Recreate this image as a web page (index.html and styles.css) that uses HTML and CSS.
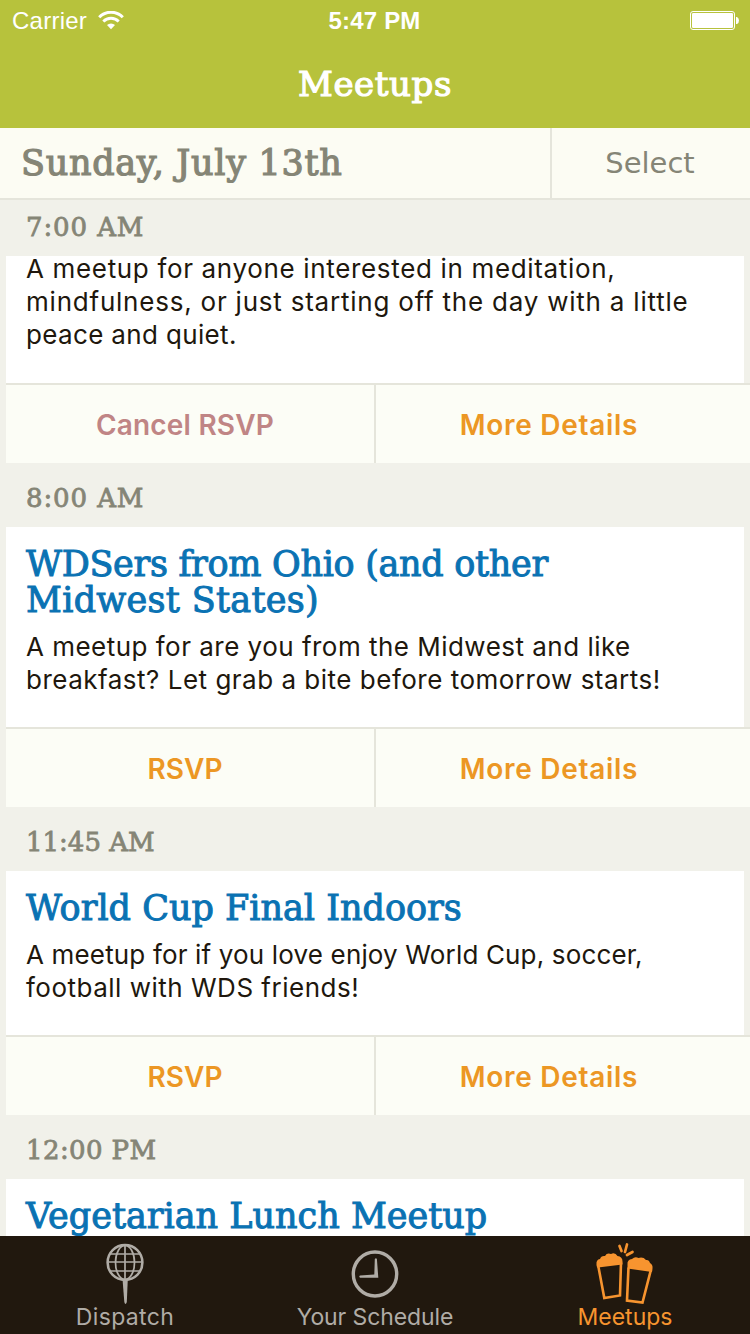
FILE: index.html
```html
<!DOCTYPE html>
<html lang="en">
<head>
<meta charset="utf-8">
<title>Meetups</title>
<link rel="stylesheet" href="styles.css">
</head>
<body>
<div class="app">
  <header class="header">
    <div class="status">
      <div class="carrier">
        <span class="carrier-name">Carrier</span>
        <svg class="wifi" width="26" height="20" viewBox="0 0 26 20">
          <path d="M1.2 6.2A16.5 16.5 0 0 1 24.8 6.2" fill="none" stroke="#fff" stroke-width="3"/>
          <path d="M5.3 10.5A10.8 10.8 0 0 1 20.7 10.5" fill="none" stroke="#fff" stroke-width="2.8"/>
          <path d="M9 14.1A5.6 5.6 0 0 1 17 14.1L13 18.3Z" fill="#fff"/>
        </svg>
      </div>
      <span class="clock">5:47 PM</span>
      <svg class="battery" width="50" height="20" viewBox="0 0 50 20">
        <rect x=".5" y=".5" width="44" height="18" rx="2.5" fill="none" stroke="#fff"/>
        <rect x="2" y="2" width="41" height="15" rx="1.2" fill="#fff"/>
        <path d="M46 6h1q2 1 2 3.500t-2 3.500h-1z" fill="#fff"/>
      </svg>
    </div>
    <h1 class="title">Meetups</h1>
  </header>

  <div class="datebar">
    <div class="date">Sunday, July 13th</div>
    <div class="select">Select</div>
  </div>

  <main class="list">
    <h2 class="time time-pinned">7:00 AM</h2>
    <article class="card">
      <div class="body body-scrolled">
        <p class="desc"><span class="l1">A meetup for anyone interested in meditation,</span><br><span class="l2">mindfulness, or just starting off the day with a little</span><br><span class="l3">peace and quiet.</span></p>
      </div>
      <div class="actions"><a class="action cancel">Cancel RSVP</a><a class="action more">More Details</a></div>
    </article>

    <h2 class="time">8:00 AM</h2>
    <article class="card">
      <div class="body">
        <h3 class="name"><span class="n1">WDSers from Ohio (and other</span><br><span class="n2">Midwest States)</span></h3>
        <p class="desc"><span class="l4">A meetup for are you from the Midwest and like</span><br><span class="l5">breakfast? Let grab a bite before tomorrow starts!</span></p>
      </div>
      <div class="actions"><a class="action">RSVP</a><a class="action more">More Details</a></div>
    </article>

    <h2 class="time time-late">11:45 AM</h2>
    <article class="card">
      <div class="body">
        <h3 class="name">World Cup Final Indoors</h3>
        <p class="desc"><span class="l6">A meetup for if you love enjoy World Cup, soccer,</span><br><span class="l7">football with WDS friends!</span></p>
      </div>
      <div class="actions"><a class="action">RSVP</a><a class="action more">More Details</a></div>
    </article>

    <h2 class="time time-noon">12:00 PM</h2>
    <article class="card">
      <div class="body">
        <h3 class="name">Vegetarian Lunch Meetup</h3>
      </div>
    </article>
  </main>

  <nav class="tabs">
    <a class="tab tab-dispatch">
      <svg width="60" height="66" viewBox="0 0 60 66" fill="none" stroke="currentColor">
        <circle cx="30" cy="26.500" r="17.400" stroke-width="2.500"/>
        <ellipse cx="30" cy="26.500" rx="9.500" ry="17" stroke-width="1.700"/>
        <path d="M30 9.500V43.500M13 26H47M15.500 18H44.500M15.500 35H44.500" stroke-width="1.700"/>
        <path d="M27.500 43H32.800L31.800 66Q30.500 70 29.300 66Z" fill="currentColor" stroke="none"/>
      </svg>
      <span>Dispatch</span>
    </a>
    <a class="tab tab-schedule">
      <svg width="60" height="66" viewBox="0 0 60 66" fill="none" stroke="currentColor">
        <ellipse cx="30" cy="38" rx="21.700" ry="22" stroke-width="3.400"/>
        <path d="M29.800 23Q31 21.500 31.900 23L33.300 41.800H15Q13.500 40.500 15 39.500L29.300 38.600Z" fill="currentColor" stroke="none"/>
      </svg>
      <span>Your Schedule</span>
    </a>
    <a class="tab tab-meetups">
      <svg width="60" height="66" viewBox="0 0 60 66" fill="none" stroke="currentColor">
        <g transform="translate(0 2.500)">
          <path d="M3 26L9.300 59.500L25 57L26 24" stroke-width="2.600"/>
          <path d="M2 29L1.500 26Q1 21 5 20.500Q6 17 10 17.500Q12 14 16 15.500Q20 13.500 22.500 17.500Q27.500 18 27.500 23V26L3 29Z" fill="currentColor" stroke="none"/>
          <path d="M33.500 29L32 62L47.500 64L56 31" stroke-width="2.600"/>
          <path d="M32.500 30V26Q32 21 37 20.500Q40 17.500 43.500 19.500Q48 18 51 21.500Q54 21 55 24.500Q58 26 57.500 30L57 33.500Z" fill="currentColor" stroke="none"/>
          <path d="M24.500 7.500L26.500 12.500M32 6L30 13.500M37.500 13.500L32 16.500" stroke-width="2.700" stroke-linecap="round"/>
        </g>
      </svg>
      <span>Meetups</span>
    </a>
  </nav>
</div>
</body>
</html>
```
FILE: styles.css
```css
* { box-sizing: border-box; }
body { margin: 0; }
h1, h2, h3, p { margin: 0; font-weight: 400; }

.app {
  width: 750px;
  height: 1334px;
  display: flex;
  flex-direction: column;
  overflow: hidden;
  background: #f1f1ea;
  font-family: Inter, sans-serif;
}

.header { height: 128px; flex: none; background: #b7c23c; color: #fff; }
.status {
  display: grid;
  grid-template-columns: 1fr auto 1fr;
  align-items: center;
  height: 40px;
  padding: 2px 10px 0 12px;
  font-family: "Liberation Sans", sans-serif;
  font-size: 24px;
}
.carrier { display: flex; align-items: center; gap: 11px; letter-spacing: .25px; }
.clock { font-weight: 700; letter-spacing: .2px; margin-right: 3px; }
.battery { justify-self: end; }
.title, .date, .time, .name { font-family: "DejaVu Serif", serif; }
.title { height: 88px; line-height: 88px; text-align: center; font-size: 34px; letter-spacing: .6px; -webkit-text-stroke: 1.2px; }

.datebar {
  display: flex;
  flex: none;
  height: 72px;
  background: #fcfcf3;
  border-bottom: 2px solid #e5e5db;
  color: #858576;
}
.date { width: 550px; padding-left: 21px; font-size: 35px; letter-spacing: .7px; line-height: 70px; -webkit-text-stroke: 1.2px; }
.select {
  flex: 1;
  padding-right: 2px;
  border-left: 2px solid #e5e5db;
  text-align: center;
  font-family: "DejaVu Sans", sans-serif;
  font-size: 29px;
  line-height: 70px;
}

.list { flex: 1; min-height: 0; overflow: hidden; }
.time { height: 64px; padding: 4px 0 0 26px; line-height: 63px; font-size: 26px; letter-spacing: .9px; color: #858576; -webkit-text-stroke: .8px; }
.time-pinned { height: 56px; padding-top: 0; line-height: 55px; }
.time-late { letter-spacing: 0; }
.time-noon { letter-spacing: .4px; }
.card { margin-left: 6px; }
.body { margin-right: 6px; padding: 19px 20px 31px; background: #fff; }
.body-scrolled { display: flow-root; height: 127px; padding-top: 0; }
.body-scrolled .desc { margin-top: -4px; padding-top: 0; }
.name { font-size: 35px; line-height: 36px; color: #0a72b3; white-space: nowrap; -webkit-text-stroke: 1px; }
.n1 { letter-spacing: -.3px; }
.n2 { letter-spacing: .3px; }
.desc { padding-top: 12px; font-size: 26px; line-height: 33px; color: #20170d; white-space: nowrap; }
.l1 { letter-spacing: .66px; }
.l2 { letter-spacing: .78px; }
.l3 { letter-spacing: .35px; }
.l4 { letter-spacing: .48px; }
.l5 { letter-spacing: .5px; }
.l6 { letter-spacing: .16px; }
.l7 { letter-spacing: .5px; }
.actions { display: grid; grid-template-columns: 370px 1fr; height: 80px; border-top: 2px solid #e5e5db; background: #fcfdf6; }
.action { height: 78px; padding: 3px 10px 0 0; text-align: center; font-size: 28px; font-weight: 600; line-height: 75px; color: #ec9724; border-right: 2px solid #e5e5db; }
.more { border-right: 0; padding-right: 28px; letter-spacing: .7px; }
.cancel { color: #c08585; letter-spacing: .2px; }

.tabs { display: grid; grid-template-columns: repeat(3, 250px); flex: none; height: 98px; background: #21180e; color: #b0aca6; }
.tab { display: flex; flex-direction: column; align-items: center; font-size: 23px; line-height: 30px; }
.tab svg { overflow: visible; }
.tab-dispatch { letter-spacing: .35px; }
.tab-schedule { letter-spacing: -.1px; }
.tab-meetups { color: #f7942f; }
```
